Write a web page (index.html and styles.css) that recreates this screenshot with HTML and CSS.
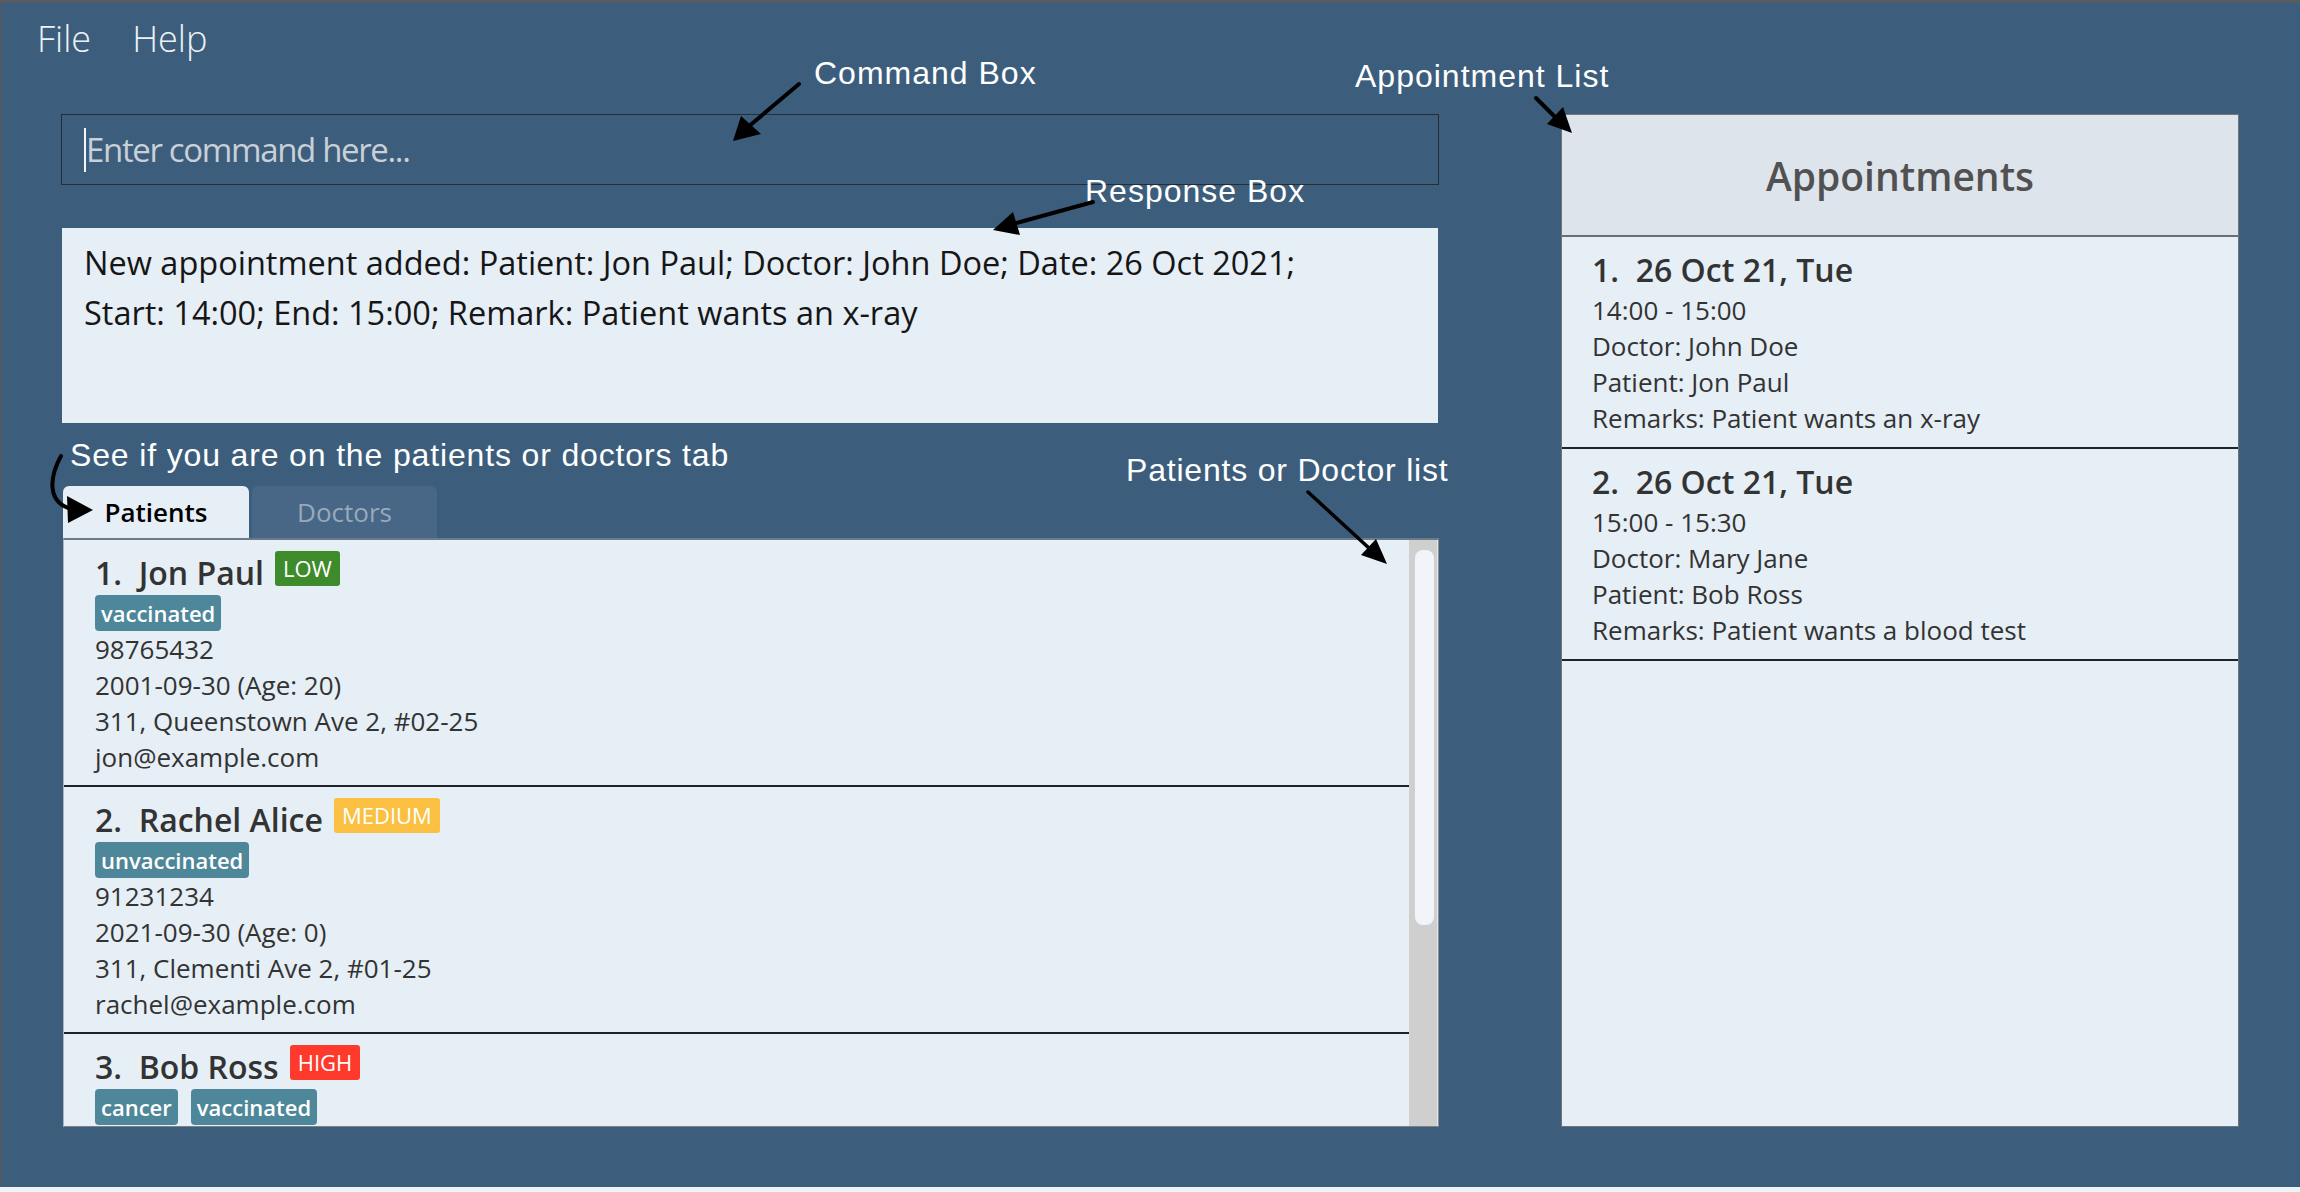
FILE: index.html
```html
<!DOCTYPE html>
<html lang="en">
<head>
<meta charset="utf-8">
<title>Appointments</title>
<link rel="stylesheet" href="styles.css">
</head>
<body>
<div class="window">
  <nav class="menubar"><span>File</span><span>Help</span></nav>
  <main class="main">
    <section class="left">
      <div class="command-box"><span class="caret"></span><span class="placeholder">Enter command here...</span></div>
      <div class="response-box">New appointment added: Patient: Jon Paul; Doctor: John Doe; Date: 26 Oct 2021;<br>Start: 14:00; End: 15:00; Remark: Patient wants an x-ray</div>
      <div class="tabs">
        <div class="tab active">Patients</div>
        <div class="tab inactive">Doctors</div>
      </div>
      <div class="list">
        <div class="cards">
          <article class="card">
            <div class="card-title"><span class="name">1.  Jon Paul</span><span class="badge low">LOW</span></div>
            <div class="tags"><span class="tag">vaccinated</span></div>
            <div class="line">98765432</div>
            <div class="line">2001-09-30 (Age: 20)</div>
            <div class="line">311, Queenstown Ave 2, #02-25</div>
            <div class="line">jon@example.com</div>
          </article>
          <article class="card">
            <div class="card-title"><span class="name">2.  Rachel Alice</span><span class="badge medium">MEDIUM</span></div>
            <div class="tags"><span class="tag">unvaccinated</span></div>
            <div class="line">91231234</div>
            <div class="line">2021-09-30 (Age: 0)</div>
            <div class="line">311, Clementi Ave 2, #01-25</div>
            <div class="line">rachel@example.com</div>
          </article>
          <article class="card">
            <div class="card-title"><span class="name">3.  Bob Ross</span><span class="badge high">HIGH</span></div>
            <div class="tags"><span class="tag">cancer</span><span class="tag">vaccinated</span></div>
          </article>
        </div>
        <div class="scrollbar"><div class="thumb"></div></div>
      </div>
    </section>
    <aside class="appointments">
      <header class="appt-header">Appointments</header>
      <div class="appt-list">
        <article class="appt">
          <div class="appt-title">1.  26 Oct 21, Tue</div>
          <div class="line">14:00 - 15:00</div>
          <div class="line">Doctor: John Doe</div>
          <div class="line">Patient: Jon Paul</div>
          <div class="line">Remarks: Patient wants an x-ray</div>
        </article>
        <article class="appt">
          <div class="appt-title">2.  26 Oct 21, Tue</div>
          <div class="line">15:00 - 15:30</div>
          <div class="line">Doctor: Mary Jane</div>
          <div class="line">Patient: Bob Ross</div>
          <div class="line">Remarks: Patient wants a blood test</div>
        </article>
      </div>
    </aside>
  </main>
</div>

<div class="annotations">
  <span class="note note-command">Command Box</span>
  <span class="note note-appt">Appointment List</span>
  <span class="note note-response">Response Box</span>
  <span class="note note-tab">See if you are on the patients or doctors tab</span>
  <span class="note note-list">Patients or Doctor list</span>
  <svg class="arrows" width="2300" height="1192" viewBox="0 0 2300 1192">
    <g stroke="#000" stroke-width="4" fill="none" stroke-linecap="round">
      <line x1="799" y1="84" x2="748" y2="127"/>
      <line x1="1093" y1="202" x2="1013" y2="224"/>
      <line x1="1536" y1="98" x2="1556" y2="118"/>
      <line x1="1308" y1="492" x2="1370" y2="549" stroke-width="3.5"/>
      <path d="M61 456 C 49 478 47 503 72 509"/>
    </g>
    <g fill="#000">
      <polygon points="733,141 741,116 761,134"/>
      <polygon points="993,230 1013,212 1020,235"/>
      <polygon points="1572,133 1547,124 1563,107"/>
      <polygon points="1387,564 1361,555 1376,539"/>
      <polygon points="93,510 67,496 68,523"/>
    </g>
  </svg>
</div>
</body>
</html>
```

FILE: styles.css
```css
html, body {
  margin: 0;
  padding: 0;
}

body {
  position: relative;
  width: 2300px;
  height: 1192px;
  overflow: hidden;
  background: #eef3f8;
  font-family: "Open Sans", "Noto Sans", sans-serif;
}

.window {
  height: 1187px;
  box-sizing: border-box;
  background: #3c5e7c;
  border-top: 3px solid #575c62;
  border-left: 2px solid #4d5a66;
  display: flex;
  flex-direction: column;
}

.menubar {
  height: 111px;
  box-sizing: border-box;
  padding: 12px 0 0 35px;
  display: flex;
  align-items: flex-start;
  gap: 41px;
  color: #eef2f6;
  font-size: 36px;
  font-weight: 300;
  line-height: 48px;
}

.main {
  display: flex;
  gap: 122px;
  padding-left: 59px;
  height: 1013px;
}

.left {
  width: 1378px;
  display: flex;
  flex-direction: column;
}

.command-box {
  height: 71px;
  box-sizing: border-box;
  border: 1px solid #262c33;
  display: flex;
  align-items: center;
  padding-left: 22px;
}

.caret {
  width: 2px;
  height: 44px;
  background: #f4f6f8;
}

.placeholder {
  font-size: 33px;
  line-height: 44px;
  letter-spacing: -1.35px;
  color: #c9d0d8;
}

.response-box {
  margin: 43px 1px 0 1px;
  height: 195px;
  box-sizing: border-box;
  background: #e6eef6;
  padding: 10px 22px 0 22px;
  font-size: 32.5px;
  line-height: 50px;
  color: #161616;
  white-space: nowrap;
}

.tabs {
  margin-top: 63px;
  height: 52px;
  display: flex;
  gap: 3px;
  padding-left: 2px;
}

.tab {
  width: 186px;
  border-radius: 6px 6px 0 0;
  display: flex;
  align-items: center;
  justify-content: center;
  font-size: 26px;
  line-height: 36px;
}

.tab.active {
  background: #e6eef6;
  color: #000;
  font-weight: 600;
}

.tab.inactive {
  width: 185px;
  background: #486786;
  color: #97a9bb;
  font-weight: 400;
}

.list {
  flex: 1;
  min-height: 0;
  margin-left: 2px;
  display: flex;
  background: #e6eef6;
  border-top: 2px solid #6b7b8b;
  border-left: 1px solid #a9b3bd;
  border-right: 1px solid #8a9096;
  border-bottom: 1px solid #7c8288;
  overflow: hidden;
}

.cards {
  flex: 1;
  overflow: hidden;
}

.card {
  padding: 11px 31px 10px 31px;
  border-bottom: 2px solid #1f2327;
}

.card-title {
  display: flex;
  align-items: flex-start;
  gap: 11px;
  height: 44px;
}

.name {
  font-size: 32px;
  font-weight: 600;
  line-height: 44px;
  color: #333;
  white-space: pre;
}

.badge {
  height: 35px;
  line-height: 35px;
  padding: 0 8px;
  font-size: 22px;
  color: #fff;
  border-radius: 3px;
}

.badge.low { background: #3e8b2b; }
.badge.medium { background: #fbbf42; }
.badge.high { background: #ff3a2d; }

.tags {
  display: flex;
  gap: 13px;
  height: 36px;
}

.tag {
  height: 36px;
  line-height: 36px;
  padding: 0 6px;
  background: #4e8799;
  color: #fff;
  font-size: 22px;
  font-weight: 600;
  border-radius: 4px;
}

.line {
  font-size: 26px;
  line-height: 36px;
  color: #333;
  white-space: nowrap;
}

.scrollbar {
  width: 29px;
  box-sizing: border-box;
  background: #cfcfcf;
  padding: 10px 3px 0 6px;
  border-right: 1px solid #e4e6e8;
}

.thumb {
  height: 375px;
  background: #f1f4f8;
  border-radius: 8px;
}

.appointments {
  width: 678px;
  box-sizing: border-box;
  border: 1px solid #6f757a;
  background: #e6eef6;
  display: flex;
  flex-direction: column;
}

.appt-header {
  height: 122px;
  box-sizing: border-box;
  border-bottom: 2px solid #6b6f73;
  background: #dde4eb;
  display: flex;
  align-items: center;
  justify-content: center;
  font-size: 39px;
  font-weight: 600;
  color: #515151;
}

.appt {
  padding: 11px 31px 11px 30px;
  border-bottom: 2px solid #1f2327;
}

.appt-title {
  font-size: 32px;
  font-weight: 600;
  line-height: 44px;
  color: #333;
  white-space: pre;
}

.annotations {
  position: absolute;
  inset: 0;
  pointer-events: none;
}

.note {
  position: absolute;
  color: #fff;
  font-family: "Liberation Sans", Arial, sans-serif;
  font-size: 32px;
  line-height: 32px;
  letter-spacing: 1px;
  white-space: nowrap;
}

.note-command { left: 814px; top: 57px; }
.note-appt { left: 1355px; top: 60px; }
.note-response { left: 1085px; top: 175px; }
.note-tab { left: 70px; top: 439px; letter-spacing: 0.85px; }
.note-list { left: 1126px; top: 454px; letter-spacing: 0.8px; }

.arrows {
  position: absolute;
  left: 0;
  top: 0;
}
```
